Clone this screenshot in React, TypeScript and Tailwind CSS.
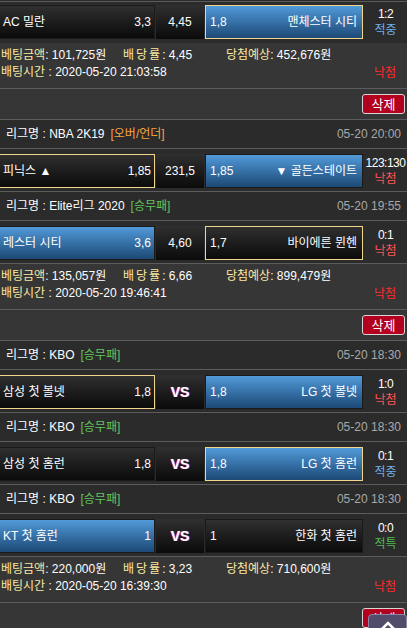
import React from "react";

type Tone = "blue" | "dark";

interface Game {
  league?: { name: string; type: string; typeColor: string; time: string };
  home: string;
  homeOdds: string;
  homeTone: Tone;
  homePick?: boolean;
  mid: string;
  away: string;
  awayOdds: string;
  awayTone: Tone;
  awayPick?: boolean;
  score: string;
  result: string;
  first?: boolean;
}

interface Bet {
  amount: string;
  rate: string;
  expect: string;
  time: string;
}

interface Slip {
  games: Game[];
  bet?: Bet;
}

const resultColor: Record<string, string> = {
  적중: "text-[#6fb0ea]",
  낙첨: "text-[#ff5555]",
  적특: "text-[#4dbb4d]",
};

const slips: Slip[] = [
  {
    games: [
      {
        first: true,
        home: "AC 밀란",
        homeOdds: "3,3",
        homeTone: "dark",
        mid: "4,45",
        away: "맨체스터 시티",
        awayOdds: "1,8",
        awayTone: "blue",
        awayPick: true,
        score: "1:2",
        result: "적중",
      },
    ],
    bet: { amount: "101,725원", rate: "4,45", expect: "452,676원", time: "2020-05-20 21:03:58" },
  },
  {
    games: [
      {
        league: { name: "NBA 2K19", type: "[오버/언더]", typeColor: "text-[#f7a23e]", time: "05-20 20:00" },
        home: "피닉스 ▲",
        homeOdds: "1,85",
        homeTone: "dark",
        homePick: true,
        mid: "231,5",
        away: "▼ 골든스테이트",
        awayOdds: "1,85",
        awayTone: "blue",
        score: "123:130",
        result: "낙첨",
      },
      {
        league: { name: "Elite리그 2020", type: "[승무패]", typeColor: "text-[#62c45a]", time: "05-20 19:55" },
        home: "레스터 시티",
        homeOdds: "3,6",
        homeTone: "blue",
        mid: "4,60",
        away: "바이에른 뮌헨",
        awayOdds: "1,7",
        awayTone: "dark",
        awayPick: true,
        score: "0:1",
        result: "낙첨",
      },
    ],
    bet: { amount: "135,057원", rate: "6,66", expect: "899,479원", time: "2020-05-20 19:46:41" },
  },
  {
    games: [
      {
        league: { name: "KBO", type: "[승무패]", typeColor: "text-[#62c45a]", time: "05-20 18:30" },
        home: "삼성 첫 볼넷",
        homeOdds: "1,8",
        homeTone: "dark",
        homePick: true,
        mid: "VS",
        away: "LG 첫 볼넷",
        awayOdds: "1,8",
        awayTone: "blue",
        score: "1:0",
        result: "낙첨",
      },
      {
        league: { name: "KBO", type: "[승무패]", typeColor: "text-[#62c45a]", time: "05-20 18:30" },
        home: "삼성 첫 홈런",
        homeOdds: "1,8",
        homeTone: "dark",
        mid: "VS",
        away: "LG 첫 홈런",
        awayOdds: "1,8",
        awayTone: "blue",
        awayPick: true,
        score: "0:1",
        result: "적중",
      },
      {
        league: { name: "KBO", type: "[승무패]", typeColor: "text-[#62c45a]", time: "05-20 18:30" },
        home: "KT 첫 홈런",
        homeOdds: "1",
        homeTone: "blue",
        mid: "VS",
        away: "한화 첫 홈런",
        awayOdds: "1",
        awayTone: "dark",
        score: "0:0",
        result: "적특",
      },
    ],
    bet: { amount: "220,000원", rate: "3,23", expect: "710,600원", time: "2020-05-20 16:39:30" },
  },
];

function cellClass(tone: Tone, pick?: boolean) {
  const bg =
    tone === "blue"
      ? "bg-linear-to-b from-[#519ad9] to-[#1d4a77]"
      : "bg-linear-to-b from-[#303030] to-[#0b0b0b]";
  const border = pick ? "border border-[#f0d68c]" : "border border-[#1a1a1a]";
  return `${bg} ${border} flex items-center justify-between text-white`;
}

function LeagueHeader({ league }: { league: NonNullable<Game["league"]> }) {
  return (
    <div className="h-[29px] bg-[#2b2b2b] border-b border-[#5c5c5c] flex items-center justify-between pl-[6px] pr-[6px]">
      <div className="text-white">
        리그명 : {league.name}
        <span className={`ml-[6px] ${league.typeColor}`}>{league.type}</span>
      </div>
      <div className="text-[#a8a8a8]">{league.time}</div>
    </div>
  );
}

function MatchRow({ game }: { game: Game }) {
  return (
    <div
      className={`bg-[#2b2b2b] -ml-[6px] grid grid-cols-[161px_48px_158px_1fr] gap-x-px ${
        game.first ? "pt-[3px] pb-[4px]" : "pt-[5px] pb-[3px] border-b border-[#5c5c5c]"
      }`}
    >
      <div className={`h-[34px] pl-[8px] pr-[3px] ${cellClass(game.homeTone, game.homePick)}`}>
        <span>{game.home}</span>
        <span>{game.homeOdds}</span>
      </div>
      <div className="h-[34px] bg-linear-to-b from-[#303030] to-[#0b0b0b] flex items-center justify-center text-white">
        {game.mid === "VS" ? (
          <span className="font-bold text-[14px] [text-shadow:-1px_0_#e02020,1px_0_#3060ff]">VS</span>
        ) : (
          game.mid
        )}
      </div>
      <div className={`h-[34px] pl-[4px] pr-[5px] ${cellClass(game.awayTone, game.awayPick)}`}>
        <span>{game.awayOdds}</span>
        <span>{game.away}</span>
      </div>
      <div className="flex flex-col items-center pt-[1px] leading-[16px]">
        <span className="text-white tracking-[-0.5px]">{game.score}</span>
        <span className={resultColor[game.result]}>{game.result}</span>
      </div>
    </div>
  );
}

function BetInfo({ bet }: { bet: Bet }) {
  return (
    <>
      <div className="h-[46px] bg-[#363636] border-b border-[#5c5c5c] flex">
        <div className="w-[363px] pt-[4px] pl-[1px] leading-[17px]">
          <div className="grid grid-cols-[122px_103px_1fr]">
            <span>
              <span className="text-[#fbe8a2]">베팅금액</span>
              <span className="text-white">: {bet.amount}</span>
            </span>
            <span>
              <span className="text-[#fbe8a2] tracking-[2px]">배당률</span>
              <span className="text-white">: {bet.rate}</span>
            </span>
            <span>
              <span className="text-[#fbe8a2]">당첨예상</span>
              <span className="text-white">: {bet.expect}</span>
            </span>
          </div>
          <div>
            <span className="text-[#fbe8a2]">배팅시간</span>
            <span className="text-white"> : {bet.time}</span>
          </div>
        </div>
        <div className="flex-1 flex justify-center pt-[22px] text-[#ff2b2b] leading-[17px]">낙첨</div>
      </div>
      <div className="h-[31px] bg-[#363636] border-b border-[#5c5c5c] flex justify-end items-start pt-[5px] pr-[2px]">
        <button className="w-[43px] h-[20px] bg-[#b3001e] border border-[#d6d6d6] rounded-[3px] text-white text-[13px] leading-none flex items-center justify-center">
          삭제
        </button>
      </div>
    </>
  );
}

export default function App() {
  return (
    <div className="relative min-h-screen bg-[#363636] overflow-hidden font-['Liberation_Sans','Noto_Sans_CJK_KR',sans-serif] text-[12px]">
      <div className="h-px bg-[#2b2b2b]" />
      <div className="border-t border-[#5c5c5c]">
        {slips.map((slip, i) => (
          <div key={i}>
            {slip.games.map((g, j) => (
              <div key={j}>
                {g.league && <LeagueHeader league={g.league} />}
                <MatchRow game={g} />
              </div>
            ))}
            {slip.bet && <BetInfo bet={slip.bet} />}
          </div>
        ))}
      </div>

      {/* scroll to top */}
      <button className="fixed right-0 bottom-[-26px] w-[39px] h-[40px] rounded-[4px] bg-[#514c69] border border-[#8c88a4] flex justify-center pt-[6px]">
        <svg width="14" height="9" viewBox="0 0 14 9">
          <path d="M1 8 L7 2 L13 8" fill="none" stroke="#fff" strokeWidth="2.5" />
        </svg>
      </button>
    </div>
  );
}
